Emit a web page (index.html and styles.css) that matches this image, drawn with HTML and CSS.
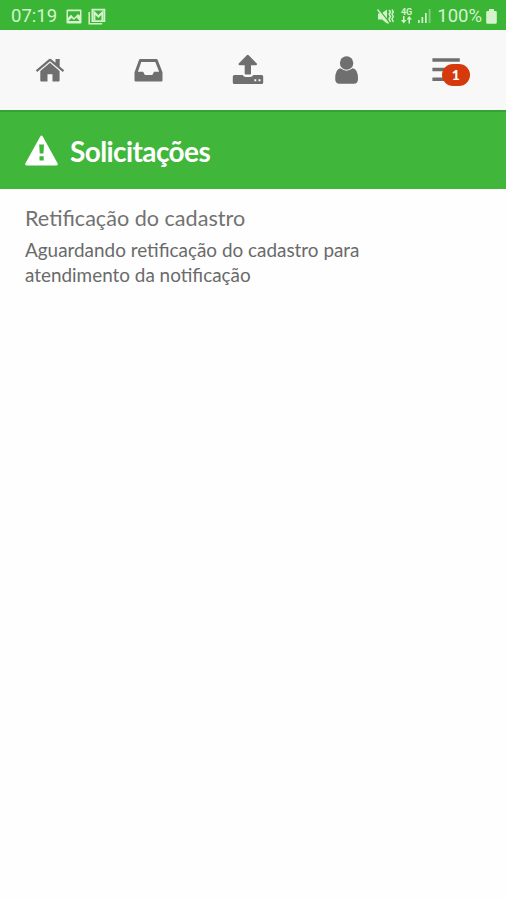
FILE: index.html
```html
<!DOCTYPE html>
<html lang="pt-BR">
<head>
  <meta charset="UTF-8" />
  <meta name="viewport" content="width=device-width, initial-scale=1.0"/>
  <title>Solicitações</title>
  <link rel="stylesheet" href="styles.css">
</head>
<body>

  <div class="status-bar">
    <div class="status-left">
      <span class="clock">07:19</span>
      <svg class="icon-picture" width="16" height="15" viewBox="0 0 16 15">
        <path fill="currentColor" fill-rule="evenodd" d="M1.5 0.5h13q1 0 1 1v12q0 1-1 1h-13q-1 0-1-1v-12q0-1 1-1zM2 2.3v6.5l3-3 3 3.3 4-4 2 1.5V2.3zM2.5 12h11l-3-3.5-2.5 2.5-2.5-2z"/>
      </svg>
      <svg class="icon-gmail" width="18" height="17" viewBox="0 0 18 17">
        <path fill="none" stroke="currentColor" stroke-width="1.5" d="M1.2 4v11.8h13"/>
        <path fill="none" stroke="currentColor" stroke-width="1.8" d="M4.4 1.7h12v11.4h-12z"/>
        <path fill="none" stroke="currentColor" stroke-width="2" d="M6.4 12.5V4.5l4 4 4-4v8"/>
      </svg>
    </div>
    <div class="status-right">
      <svg width="17" height="17" viewBox="0 0 17 17">
        <path fill="currentColor" d="M1 5.5h3.5L10 1.5v14l-5-4H1z"/>
        <path fill="none" stroke="#3ab536" stroke-width="1.2" d="M1.5 1l11 13.5"/>
        <path fill="none" stroke="currentColor" stroke-width="1.3" d="M0.5 1.5l11 14"/>
        <path fill="none" stroke="currentColor" stroke-width="1.5" d="M12 2l1.5 2-1.5 2 1.5 2.500-1.500 2.500 1.500 3M15 1.500l1.300 2.500-1.300 2 1.300 2.500-1.300 2.500 1.300 3"/>
      </svg>
      <div class="network">
        <span>4G</span>
        <svg width="11" height="8" viewBox="0 0 11 8">
          <path fill="currentColor" d="M2 0h1.500v4H5.500L2.750 7.500 0 4h2zM7.500 7.500H9V3.500h2L8.250 0 5.500 3.500h2z"/>
        </svg>
      </div>
      <svg class="icon-signal" width="13" height="14" viewBox="0 0 13 14">
        <path fill="currentColor" d="M0 11h1.700v3H0zM3.500 8h1.700v6H3.500zM7 4h1.700v10H7z"/>
        <path fill="currentColor" opacity=".45" d="M10.700 0h1.800v14h-1.800z"/>
      </svg>
      <span class="battery-text">100%</span>
      <svg class="icon-battery" width="11" height="15" viewBox="0 0 11 15">
        <path fill="currentColor" d="M3 0h5v2h1.500q1.300 0 1.300 1.300v10.200q0 1.300-1.300 1.300h-8Q0.200 14.800 0.200 13.500V3.300Q0.200 2 1.500 2H3z"/>
      </svg>
    </div>
  </div>

  <nav class="nav">
    <a class="nav-item" aria-label="Início">
      <svg width="34" height="34" viewBox="0 0 34 34">
        <path fill="currentColor" d="M17 9.800L26.600 18v9.500q0 1-1 1h-6.100v-7.200h-5v7.200H8.300q-1 0-1-1V18z"/>
        <path fill="currentColor" d="M2.800 17.300L15.500 6.400q1.500-1.300 3 0L22.500 9.800V6h4.200v7.400l4.500 3.900-1.400 1.700L17 8.200 4.200 19z"/>
      </svg>
    </a>
    <a class="nav-item" aria-label="Caixa de entrada">
      <svg width="34" height="34" viewBox="0 0 34 34">
        <path fill="currentColor" fill-rule="evenodd" d="M8.200 6h16.200q1 0 1.300 1l4.500 11.500q.3.800.3 1.700v7q0 1.200-1.200 1.200H3.700q-1.200 0-1.200-1.200v-7q0-.9.300-1.700L7 7q.3-1 1.200-1zM9.300 9L5.900 18.800h5.200l1.800 3.300h7.400l1.800-3.300h5L23.300 9z"/>
      </svg>
    </a>
    <a class="nav-item" aria-label="Enviar">
      <svg width="34" height="34" viewBox="0 0 34 34">
        <path fill="currentColor" d="M16.700 1.800q.6 0 1 .5l8.100 8.300q.7 1.200-.7 1.700H20v8.200q0 1-1 1h-4.300q-1 0-1-1v-8.200H8.500q-1.500-.5-.8-1.700l8.100-8.300q.4-.5.9-.5z"/>
        <path fill="currentColor" fill-rule="evenodd" d="M3.300 22h8.300q1.200 2 3.200 2h4.400q2 0 3.200-2h8.300q1.500 0 1.500 1.500v6q0 1.500-1.500 1.500H3.300q-1.500 0-1.500-1.500v-6Q1.800 22 3.300 22zM23.300 26.300v2h2v-2zM27.500 26.300v2h2v-2z"/>
      </svg>
    </a>
    <a class="nav-item" aria-label="Perfil">
      <svg width="34" height="34" viewBox="0 0 34 34">
        <circle fill="currentColor" cx="16.600" cy="10" r="6.700"/>
        <path fill="currentColor" d="M10.500 15.300q6 4.800 12.200 0Q28.100 16 28 26q0 4.700-4.200 4.700H9.500Q5.200 30.700 5.200 26q0-10 5.300-10.700z"/>
      </svg>
    </a>
    <a class="nav-item" aria-label="Menu">
      <svg width="34" height="34" viewBox="0 0 34 34">
        <path fill="currentColor" d="M3.400 5.300h27.400v3.500H3.400zM3.400 14.800h27.400v3.500H3.400zM3.400 24.500h27.400V28H3.400z"/>
      </svg>
      <span class="badge">1</span>
    </a>
  </nav>

  <header class="title-bar">
    <svg width="34" height="32" viewBox="0 0 34 32">
      <path fill="currentColor" fill-rule="evenodd" d="M15.200 1.600q1.300-2.200 2.600 0L32.400 28q1.200 2.500-1.400 2.500H2Q-.6 30.500.6 28zM14.200 9.500l.5 9h3.800l.5-9zM14.500 21.300v4.200h4.200v-4.200z"/>
    </svg>
    <h1>Solicitações</h1>
  </header>

  <main class="content">
    <h2>Retificação do cadastro</h2>
    <p>Aguardando retificação do cadastro para atendimento da notificação</p>
  </main>

</body>
</html>
```
FILE: styles.css
```css
body {
  margin: 0;
  min-height: 100vh;
  background: #fefefe;
  color: #727272;
  font-family: Lato, sans-serif;
}

svg {
  display: block;
  flex: none;
}

.status-bar {
  display: flex;
  justify-content: space-between;
  box-sizing: border-box;
  height: 30px;
  padding: 0 9px 0 11px;
  background: #3ab536;
  color: #d4f3cc;
  font-family: Roboto, sans-serif;
  font-size: 18.5px;
}

.status-left,
.status-right {
  display: flex;
  align-items: center;
  padding-top: 2px;
}

.icon-picture {
  margin-left: 9px;
}

.icon-gmail {
  margin-left: 6px;
}

.network {
  display: flex;
  flex-direction: column;
  align-items: center;
  margin-left: 7px;
  font-size: 9px;
  font-weight: bold;
  line-height: 8px;
}

.icon-signal {
  margin-left: 6px;
}

.battery-text {
  margin-left: 6px;
}

.icon-battery {
  margin-left: 4px;
}

.nav {
  display: grid;
  grid-template-columns: repeat(5, 1fr);
  box-sizing: border-box;
  height: 80px;
  padding-right: 10px;
  background: #f8f8f8;
}

.nav-item {
  position: relative;
  display: flex;
  align-items: center;
  justify-content: center;
  color: #6f6f6f;
}

.badge {
  position: absolute;
  top: 34px;
  left: 45px;
  width: 28px;
  height: 22px;
  border-radius: 11px;
  background: #d63a0c;
  color: #fff;
  font-size: 14px;
  font-weight: 900;
  line-height: 22px;
  text-align: center;
}

.title-bar {
  display: flex;
  align-items: center;
  gap: 11px;
  box-sizing: border-box;
  height: 79px;
  padding: 1px 25px 0;
  border-top: 2px solid #36a136;
  background: #40b63a;
  color: #fff;
}

.title-bar h1 {
  margin: 0;
  font-size: 28px;
  font-weight: bold;
  letter-spacing: -0.6px;
}

.content {
  padding: 16px 25px;
}

.content h2 {
  margin: 0;
  font-size: 21.6px;
  font-weight: normal;
  line-height: 26px;
}

.content p {
  max-width: 380px;
  margin: 6px 0 0;
  color: #6a6a6a;
  font-size: 18.9px;
  line-height: 25px;
}
```
